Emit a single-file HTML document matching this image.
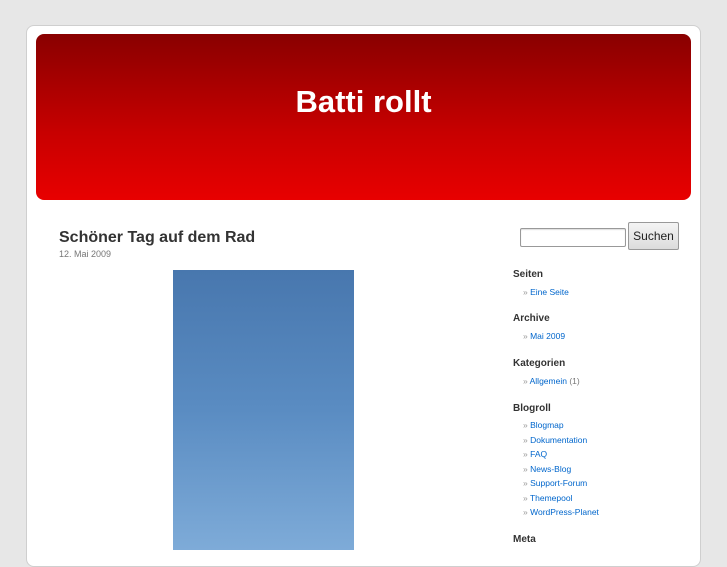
<!DOCTYPE html>
<html><head><meta charset="utf-8"><style>
body{margin:0;background:#e7e7e7;font-family:"Liberation Sans",sans-serif;width:727px;height:545px;overflow:hidden;position:relative}
.page{position:absolute;left:26px;top:25px;width:673px;height:540px;background:#fff;border:1px solid #cfcfcf;border-radius:8px}
.hdr{position:absolute;left:36px;top:34px;width:655px;height:166px;border-radius:8px;background:linear-gradient(#890000,#c80000 60%,#e80000)}
.hdr h1{margin:0;position:absolute;left:0;right:0;top:50px;text-align:center;color:#fff;font-size:31px;font-weight:bold;line-height:36px;padding-left:-2px}
.t{position:absolute;left:59px;top:229px;font-size:16px;font-weight:bold;color:#333}
.d{position:absolute;left:59px;top:249px;font-size:9px;color:#777}
.img{position:absolute;left:173px;top:270px;width:181px;height:280px;background:linear-gradient(#4877ae,#5a8cc2 50%,#7eabd8)}
.in{position:absolute;left:520px;top:228px;width:104px;height:17px;border:1px solid #999;border-radius:2px;box-shadow:inset 0 1px 1px #ddd}
.btn{position:absolute;left:628px;top:222px;width:49px;height:26px;border:1px solid #999;border-radius:2px;background:linear-gradient(#f4f4f4,#dcdcdc);font-size:12px;line-height:26px;text-align:center;color:#222}
.h{position:absolute;left:513px;font-size:10px;font-weight:bold;color:#333}
.l{position:absolute;left:523px;font-size:8.5px;color:#0066cc}
.l:before{content:"» ";color:#999}
.l span{color:#777}
</style></head><body>
<div class="page"></div>
<div class="hdr"><h1>Batti rollt</h1></div>
<div class="t">Schöner Tag auf dem Rad</div>
<div class="d">12. Mai 2009</div>
<div class="img"></div>
<div class="in"></div><div class="btn">Suchen</div>
<div class="h" style="top:269px">Seiten</div>
<div class="l" style="top:287px">Eine Seite</div>
<div class="h" style="top:313px">Archive</div>
<div class="l" style="top:331px">Mai 2009</div>
<div class="h" style="top:358px">Kategorien</div>
<div class="l" style="top:376px">Allgemein <span>(1)</span></div>
<div class="h" style="top:403px">Blogroll</div>
<div class="l" style="top:420px">Blogmap</div>
<div class="l" style="top:435px">Dokumentation</div>
<div class="l" style="top:449px">FAQ</div>
<div class="l" style="top:464px">News-Blog</div>
<div class="l" style="top:478px">Support-Forum</div>
<div class="l" style="top:493px">Themepool</div>
<div class="l" style="top:507px">WordPress-Planet</div>
<div class="h" style="top:534px">Meta</div>
</body></html>
